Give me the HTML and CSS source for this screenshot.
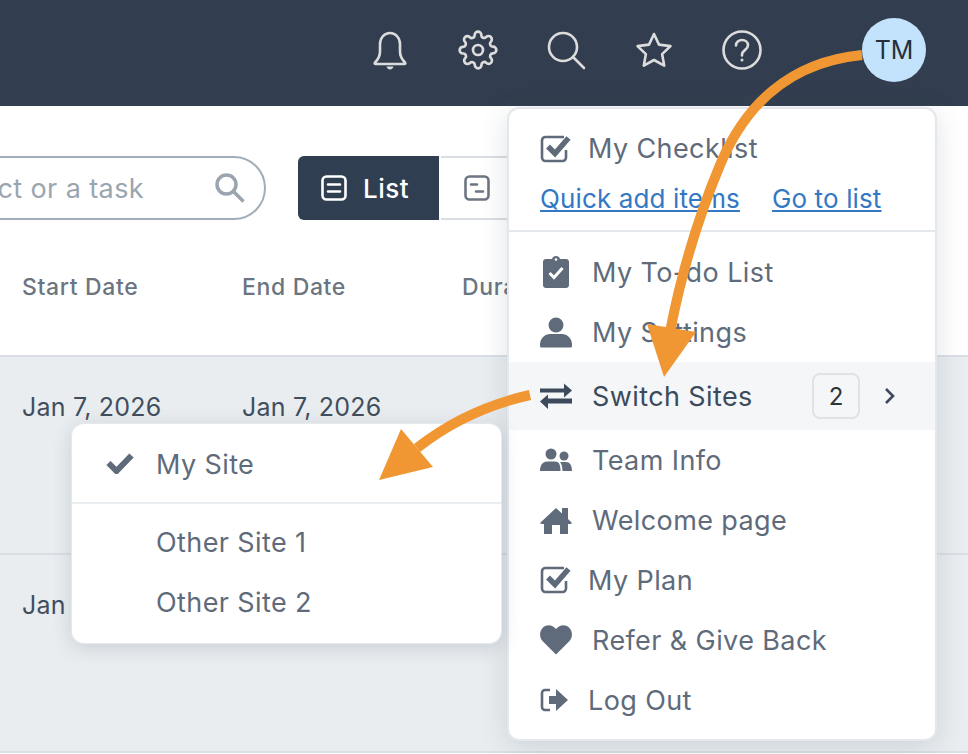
FILE: index.html
```html
<!DOCTYPE html>
<html lang="en">
<head>
  <meta charset="UTF-8">
  <meta name="viewport" content="width=device-width, initial-scale=1.0">
  <title>Switch Sites</title>
  <link rel="stylesheet" href="styles.css">
</head>
<body>
  <header class="topbar">
    <svg class="top-icon" viewBox="0 0 40 40"><path d="M5 32.500c3-3 5-5.500 5-11V14c0-6 4.300-11 10-11s10 5 10 11v7.500c0 5.500 2 8 5 11 .7.800.3 1.500-.6 1.500H5.600c-.9 0-1.300-.7-.6-1.500z"/><path class="solid" d="M16.500 36.500h7c-.5 2-2 3-3.500 3s-3-1-3.500-3z"/></svg>
    <svg class="top-icon" viewBox="0 0 24 24"><circle cx="12" cy="12" r="3"/><path class="thin" d="M19.400 15a1.650 1.650 0 0 0 .33 1.820l.06.06a2 2 0 0 1 0 2.830 2 2 0 0 1-2.830 0l-.06-.06a1.650 1.650 0 0 0-1.820-.33 1.650 1.650 0 0 0-1 1.510V21a2 2 0 0 1-2 2 2 2 0 0 1-2-2v-.09A1.650 1.650 0 0 0 9 19.400a1.650 1.650 0 0 0-1.820.33l-.06.06a2 2 0 0 1-2.830 0 2 2 0 0 1 0-2.830l.06-.06a1.650 1.650 0 0 0 .33-1.820 1.650 1.650 0 0 0-1.510-1H3a2 2 0 0 1-2-2 2 2 0 0 1 2-2h.09A1.650 1.650 0 0 0 4.600 9a1.650 1.650 0 0 0-.33-1.820l-.06-.06a2 2 0 0 1 0-2.830 2 2 0 0 1 2.830 0l.06.06a1.650 1.650 0 0 0 1.820.33H9a1.650 1.650 0 0 0 1-1.510V3a2 2 0 0 1 2-2 2 2 0 0 1 2 2v.09a1.650 1.650 0 0 0 1 1.510 1.650 1.650 0 0 0 1.820-.33l.06-.06a2 2 0 0 1 2.830 0 2 2 0 0 1 0 2.830l-.06.06a1.650 1.650 0 0 0-.33 1.820V9a1.650 1.650 0 0 0 1.510 1H21a2 2 0 0 1 2 2 2 2 0 0 1-2 2h-.09a1.650 1.650 0 0 0-1.510 1z"/></svg>
    <svg class="top-icon" viewBox="0 0 40 40"><circle cx="17" cy="17" r="14"/><path d="M27 27l11 11"/></svg>
    <svg class="top-icon" viewBox="0 0 40 40"><path d="M20 4l5 10.600 11.500 1.500-8.400 8 2.100 11.500L20 30l-10.200 5.600L11.900 24.100l-8.400-8L15 14.600z"/></svg>
    <svg class="top-icon" viewBox="0 0 40 40"><circle cx="20" cy="20" r="18.500"/><path d="M14 15.500c0-3.500 2.800-5.500 6-5.500s6 2 6 5.200c0 4.800-6 5-6 9.300v1"/><circle class="solid" cx="20" cy="30" r="1.500"/></svg>
    <div class="avatar">TM</div>
  </header>

  <div class="toolbar">
    <div class="search">
      <span class="search-text">Search for a project or a task</span>
      <svg class="search-icon" viewBox="0 0 32 32"><circle cx="12.500" cy="12.500" r="9.500"/><path d="M19.500 19.500l10 10"/></svg>
    </div>
    <div class="tabs">
      <div class="tab tab-active">
        <svg class="tab-icon" viewBox="0 0 26 26"><rect x="1.500" y="1.500" width="23" height="23" rx="4"/><path d="M7 9.500h12M7 16.500h12"/></svg>
        List
      </div>
      <div class="tab">
        <svg class="tab-icon" viewBox="0 0 26 26"><rect x="1.500" y="1.500" width="23" height="23" rx="4"/><path d="M7 9.500h6M12 16.500h7"/></svg>
        Gantt
      </div>
    </div>
  </div>

  <div class="table-head">
    <div>Start Date</div>
    <div>End Date</div>
    <div>Duration</div>
  </div>
  <div class="table-row">
    <div>Jan 7, 2026</div>
    <div>Jan 7, 2026</div>
  </div>
  <div class="table-row">
    <div>Jan 7, 2026</div>
    <div>Jan 7, 2026</div>
  </div>

  <nav class="user-menu">
    <div class="checklist">
      <div class="checklist-title">
        <svg class="menu-icon" viewBox="0 0 32 32"><path class="line" d="M24 4H5.500A3.500 3.500 0 0 0 2 7.500v17A3.500 3.500 0 0 0 5.500 28h17a3.500 3.500 0 0 0 3.500-3.500V17"/><path class="tick" d="M8 13.500l7 7L28.500 5"/></svg>
        My Checklist
      </div>
      <div class="checklist-links">
        <a href="#">Quick add items</a>
        <a href="#">Go to list</a>
      </div>
    </div>
    <div class="menu-items">
      <div class="menu-item">
        <svg class="menu-icon" viewBox="0 0 32 32"><path d="M6 3h6c.5-2 2-3 4-3s3.500 1 4 3h6c1.700 0 3 1.300 3 3v23c0 1.700-1.300 3-3 3H6c-1.700 0-3-1.300-3-3V6c0-1.700 1.300-3 3-3z"/><circle cx="16" cy="3.500" r="1.300" fill="#fff"/><path class="tick-white" d="M9.500 17l4.500 4.500L22.500 12"/></svg>
        My To-do List
      </div>
      <div class="menu-item">
        <svg class="menu-icon" viewBox="0 0 32 32"><circle cx="16" cy="9" r="7.500"/><path d="M0 29c0-7 5-11 10-11h12c5 0 10 4 10 11v1c0 1-.8 1.500-1.500 1.500h-29C.8 31.500 0 31 0 30z"/></svg>
        My Settings
      </div>
      <div class="menu-item menu-item-active">
        <svg class="menu-icon" viewBox="0 0 32 32"><path d="M0 9h24V4l8 7-8 7v-5H0zM32 19H8v-4l-8 7 8 7.500V24h24z" transform="translate(0 -.5)"/></svg>
        Switch Sites
        <span class="badge">2</span>
        <svg class="chevron" viewBox="0 0 12 18"><path d="M2 2l7 7-7 7"/></svg>
      </div>
      <div class="menu-item">
        <svg class="menu-icon" viewBox="0 0 32 32"><circle cx="11" cy="10" r="5.500"/><circle cx="24" cy="12" r="4.500"/><path d="M0 27c0-6 3-9.500 7-9.500h8c4 0 5.500 3 5.500 9.500zM22.500 27c0-4-.8-7-2.500-9h6c3.500 0 6 3 6 9z"/></svg>
        Team Info
      </div>
      <div class="menu-item">
        <svg class="menu-icon" viewBox="0 0 32 32"><path d="M16 4l6 5.500V4h6v11l4 4-1.500 1H28v10h-8v-9h-8v9H4V20H1.500L0 19z"/></svg>
        Welcome page
      </div>
      <div class="menu-item menu-item-tight">
        <svg class="menu-icon" viewBox="0 0 32 32"><path class="line" d="M24 4H5.500A3.500 3.500 0 0 0 2 7.500v17A3.500 3.500 0 0 0 5.500 28h17a3.500 3.500 0 0 0 3.500-3.500V17"/><path class="tick" d="M8 13.500l7 7L28.500 5"/></svg>
        My Plan
      </div>
      <div class="menu-item">
        <svg class="menu-icon" viewBox="0 0 32 32"><path d="M16 30.500L3 17.500C-1 13.500-.8 7 3 3.500c3.800-3.500 9.500-3 13 1.500 3.500-4.500 9.200-5 13-1.500 3.800 3.500 4 10 0 14z"/></svg>
        Refer &amp; Give Back
      </div>
      <div class="menu-item menu-item-tight">
        <svg class="menu-icon" viewBox="0 0 32 32"><path class="line" d="M10 6H5a3 3 0 0 0-3 3v14a3 3 0 0 0 3 3h5"/><path d="M9 12h7V5l12 11-12 11v-7H9z"/></svg>
        Log Out
      </div>
    </div>
  </nav>

  <div class="site-menu">
    <div class="site-item site-current">
      <svg class="site-check" viewBox="0 0 28 22"><path d="M2.500 11l8 8L25.500 3.500"/></svg>
      <span class="site-name">My Site</span>
    </div>
    <div class="site-list">
      <div class="site-item">Other Site 1</div>
      <div class="site-item">Other Site 2</div>
    </div>
  </div>

  <svg class="arrows" viewBox="0 0 968 754">
    <path class="arrow-line" d="M862 55C790 62 745 105 720 165C695 225 680 280 670 332"/>
    <path class="arrow-head" d="M647 324L696 332L664 377z"/>
    <path class="arrow-line" d="M530 395C490 404 450 422 417 448"/>
    <path class="arrow-head" d="M401 429L433 467L379 480z"/>
  </svg>
</body>
</html>
```

FILE: styles.css
```css
* {
  box-sizing: border-box;
}
body {
  position: relative;
  height: 754px;
  margin: 0;
  overflow: hidden;
  background-color: #fff;
  font-family: Inter, "Noto Sans", sans-serif;
  font-size: 26px;
  color: #5f6b7a;
}

/* top bar */
.topbar {
  display: flex;
  align-items: center;
  justify-content: flex-end;
  gap: 48px;
  height: 106px;
  padding: 0 42px 6px 0;
  background-color: #323e4f;
}
.top-icon {
  width: 40px;
  height: 40px;
  fill: none;
  stroke: #dcdcdc;
  stroke-width: 2.6;
  stroke-linecap: round;
  stroke-linejoin: round;
}
.top-icon .thin {
  stroke-width: 1.6;
}
.top-icon circle[r="3"] {
  stroke-width: 1.6;
}
.top-icon .solid {
  fill: #dcdcdc;
  stroke: none;
}
.avatar {
  display: flex;
  align-items: center;
  justify-content: center;
  width: 64px;
  height: 64px;
  margin-left: 52px;
  border-radius: 50%;
  background-color: #c3e2fb;
  color: #25303d;
  font-size: 25px;
}

/* toolbar */
.toolbar {
  display: flex;
  gap: 32px;
  height: 114px;
  padding-top: 50px;
  margin-left: -234px;
}
.search {
  display: flex;
  align-items: center;
  justify-content: flex-end;
  width: 500px;
  height: 64px;
  padding-right: 18px;
  border: 2px solid #a3adb7;
  border-radius: 32px;
  color: #9aa5b0;
}
.search-icon {
  flex: none;
  width: 32px;
  height: 32px;
  margin-left: 70px;
  fill: none;
  stroke: #9aa5b0;
  stroke-width: 3.5;
}
.search-text {
  font-size: 27px;
  letter-spacing: 0.4px;
  white-space: nowrap;
}
.tabs {
  display: flex;
  gap: 2px;
}
.tab {
  display: flex;
  align-items: center;
  gap: 16px;
  width: 141px;
  height: 64px;
  padding-left: 23px;
  border: 2px solid #d8dee4;
  border-left: none;
  color: #5f6b7a;
  font-weight: 500;
  letter-spacing: 0.5px;
}
.tab-active {
  border: none;
  border-radius: 6px 0 0 6px;
  background-color: #2f3e51;
  color: #fff;
}
.tab-icon {
  width: 26px;
  height: 26px;
  fill: none;
  stroke: #6d7681;
  stroke-width: 2.6;
  stroke-linecap: round;
}
.tab-active .tab-icon {
  stroke: #fff;
}

/* table */
.table-head,
.table-row {
  display: grid;
  grid-template-columns: 220px 220px 220px;
  padding-left: 22px;
}
.table-head {
  align-items: center;
  height: 137px;
  padding-bottom: 2px;
  border-bottom: 2px solid #d9dfe5;
  color: #6b7580;
  font-size: 23px;
  font-weight: 500;
  letter-spacing: 0.65px;
}
.table-row {
  height: 198px;
  padding-top: 35px;
  border-bottom: 2px solid #d9dfe5;
  background-color: #e9edf0;
  color: #414e5e;
  font-size: 25px;
  letter-spacing: 0.2px;
}

/* user menu */
.user-menu {
  position: absolute;
  top: 107px;
  left: 507px;
  width: 430px;
  height: 634px;
  border: 2px solid #e4e8ec;
  border-radius: 12px;
  background-color: #fff;
  box-shadow: 0 6px 28px rgba(60, 75, 95, 0.16);
}
.checklist {
  height: 123px;
  padding: 23px 0 0 31px;
  border-bottom: 2px solid #e4e8ec;
}
.checklist-title {
  display: flex;
  align-items: center;
  gap: 16px;
  font-size: 27px;
  letter-spacing: 0.4px;
}
.checklist-links {
  display: flex;
  gap: 32px;
  margin-top: 18px;
  letter-spacing: 0.13px;
}
.checklist-links a {
  color: #3378c4;
}
.menu-items {
  padding-top: 10px;
}
.menu-item {
  display: flex;
  align-items: center;
  gap: 20px;
  height: 60px;
  padding-left: 31px;
  font-size: 27px;
  letter-spacing: 0.4px;
}
.menu-item-tight {
  gap: 16px;
}
.menu-item-active {
  height: 68px;
  background-color: #f4f6f8;
  color: #3c4a5c;
}
.menu-icon {
  flex: none;
  width: 32px;
  height: 32px;
  fill: #5f6b7a;
}
.menu-item-active .menu-icon {
  fill: #3c4a5c;
}
.menu-icon .line {
  fill: none;
  stroke: #5f6b7a;
  stroke-width: 2.6;
}
.menu-icon .tick {
  fill: none;
  stroke: #5f6b7a;
  stroke-width: 5.500;
}
.menu-icon .tick-white {
  fill: none;
  stroke: #fff;
  stroke-width: 3;
}
.badge {
  display: flex;
  align-items: center;
  justify-content: center;
  width: 48px;
  height: 46px;
  margin-left: auto;
  border: 2px solid #dfe2e6;
  border-radius: 8px;
  color: #2e3338;
  font-size: 24px;
  letter-spacing: 0;
}
.chevron {
  width: 12px;
  height: 18px;
  margin: 0 39px 0 4px;
  fill: none;
  stroke: #3c4a5c;
  stroke-width: 2.6;
}

/* site submenu */
.site-menu {
  position: absolute;
  top: 424px;
  left: 72px;
  width: 429px;
  height: 219px;
  border-radius: 12px;
  background-color: #fff;
  box-shadow: 0 0 0 1px #e6e9ec, 0 4px 20px rgba(60, 75, 95, 0.2);
}
.site-item {
  display: flex;
  align-items: center;
  height: 60px;
  padding-left: 84px;
  font-size: 27px;
  letter-spacing: 0.4px;
}
.site-current {
  gap: 22px;
  height: 80px;
  padding: 0 0 0 34px;
  border-bottom: 2px solid #ebeef0;
}
.site-name {
  padding-top: 2px;
}
.site-list {
  padding-top: 8px;
}
.site-check {
  width: 28px;
  height: 22px;
  fill: none;
  stroke: #5f6b7a;
  stroke-width: 6;
}

/* annotation arrows */
.arrows {
  position: absolute;
  top: 0;
  left: 0;
  width: 968px;
  height: 754px;
  pointer-events: none;
}
.arrow-line {
  fill: none;
  stroke: #f09733;
  stroke-width: 10;
}
.arrow-head {
  fill: #f09733;
}
```
